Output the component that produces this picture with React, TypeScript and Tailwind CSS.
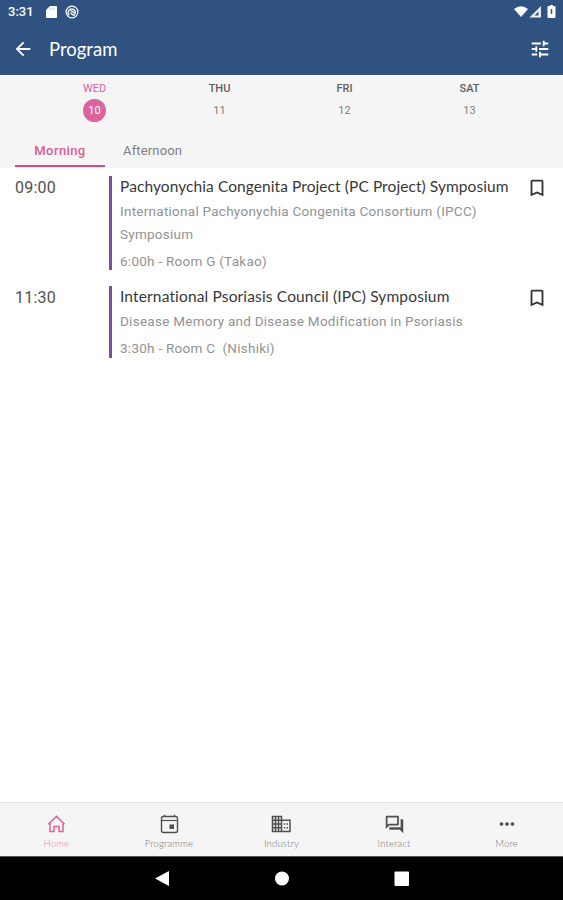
import {
  MdArrowBack,
  MdBookmarkBorder,
  MdMoreHoriz,
  MdOutlineQuestionAnswer,
  MdTune,
} from "react-icons/md";

const days = [
  { name: "WED", date: "10" },
  { name: "THU", date: "11" },
  { name: "FRI", date: "12" },
  { name: "SAT", date: "13" },
];

const sessions = [
  {
    time: "09:00",
    title: "Pachyonychia Congenita Project (PC Project) Symposium",
    titleClass: "tracking-[0.08px]",
    lines: ["International Pachyonychia Congenita Consortium (IPCC)", "Symposium"],
    place: "6:00h - Room G (Takao)",
    heightClass: "h-[94px]",
  },
  {
    time: "11:30",
    title: "International Psoriasis Council (IPC) Symposium",
    titleClass: "tracking-[0.15px]",
    lines: ["Disease Memory and Disease Modification in Psoriasis"],
    place: "3:30h - Room C\u00a0 (Nishiki)",
    heightClass: "h-[72px]",
  },
];

function HomeIcon() {
  return (
    <svg viewBox="0 0 20 20" className="h-5 w-5" fill="none" stroke="currentColor" strokeWidth="1.5">
      <path d="M2.3 10.3 10.500 2.400l8 7.900M4 9.200v8.300h4V12.500h5v5h4V9.200" />
    </svg>
  );
}

function CalendarIcon() {
  return (
    <svg viewBox="0 0 20 20" className="h-5 w-5" fill="none" stroke="currentColor" strokeWidth="1.4">
      <rect x="2.5" y="2.500" width="16" height="16" rx="2" />
      <path d="M2.500 6.500h16" strokeWidth="1.2" />
      <path d="M5.500 .8v2M15.500 .8v2" />
      <rect x="10.500" y="10.500" width="4.500" height="4.500" fill="currentColor" stroke="none" />
    </svg>
  );
}

function BuildingIcon() {
  return (
    <svg viewBox="0 0 20 20" className="h-5 w-5" fill="none" stroke="currentColor" strokeWidth="1.5">
      <path d="M1.500 2.500h9v15h-9zM4.500 2.500v15M7.500 2.500v15M1.500 6.200h9M1.500 10h9M1.500 13.700h9M10.500 6.200h8.500v11.300h-8.500" />
      <path d="M12.700 10H14.200M15.500 10H17M12.700 13.700H14.200M15.500 13.700H17" strokeWidth="1.6" />
    </svg>
  );
}

const navItems = [
  { label: "Home", icon: <HomeIcon />, color: "text-[#df6499]", labelColor: "text-[#e58bb2]" },
  { label: "Programme", icon: <CalendarIcon />, color: "text-[#505050]", labelColor: "text-[#777]" },
  { label: "Industry", icon: <BuildingIcon />, color: "text-[#505050]", labelColor: "text-[#777]" },
  { label: "Interact", icon: <MdOutlineQuestionAnswer size={21} />, color: "text-[#505050]", labelColor: "text-[#777]" },
  { label: "More", icon: <MdMoreHoriz size={22} />, color: "text-[#505050]", labelColor: "text-[#777]" },
];

function StatusBar() {
  return (
    <div className="flex h-6 items-center pr-[7px] pl-2 text-[13px] font-medium text-white">
      <span className="w-[38px]">3:31</span>
      <svg viewBox="0 0 11 12" className="h-[12px] w-[11px]" fill="currentColor">
        <path d="M4 0h6q1 0 1 1v10q0 1-1 1H1q-1 0-1-1V4z" />
        <path d="M4.2 1.5v2M6.3 1.5v2M8.4 1.5v2" stroke="#9db0cb" strokeWidth=".7" />
      </svg>
      <svg viewBox="0 0 14 14" className="ml-[8px] h-[14px] w-[14px]" fill="none" stroke="currentColor">
        <circle cx="7" cy="7" r="5.9" strokeWidth="1.2" />
        <path d="M4.3 10.3A3.6 3.6 0 1 1 10.2 8.5L5.5 5.2M5.2 7.6l3 2.4H10" strokeWidth="1.3" />
      </svg>
      <svg viewBox="0 0 42 14" className="ml-auto h-[14px] w-[42px]" fill="currentColor">
        <path d="M0 4Q7-1.5 14 4L7 12z" />
        <path d="M15.5 12.5 27 1v11.5z" fillOpacity=".9" />
        <path d="m20.5 10.5 4-4v4z" fill="#305280" />
        <path d="M34.5 1H36V0h3v1h1.5q1 0 1 1v10q0 1-1 1h-6q-1 0-1-1V2q0-1 1-1z" />
        <path d="M37.5 4v5" stroke="#305280" strokeWidth="1.5" />
      </svg>
    </div>
  );
}

export default function App() {
  return (
    <div className="flex h-[900px] w-[563px] flex-col bg-white font-[Roboto,sans-serif]">
      <header className="h-[75px] bg-[#305280]">
        <StatusBar />
        <div className="flex h-[50px] items-center pr-[12px] pl-[12px] text-white">
          <MdArrowBack size={22} />
          <h1 className="ml-[15px] font-[Lato,sans-serif] text-[18.5px] leading-[50px]">Program</h1>
          <MdTune size={22} className="ml-auto" />
        </div>
      </header>

      <div className="flex h-[51px] border-t border-b border-t-white border-b-[#f9f9f9] bg-[#f5f5f5] pr-[31px] pl-[32px]">
        {days.map((day, i) => (
          <div key={day.name} className="flex flex-1 flex-col items-center pt-[6px] text-[11px] leading-[14px]">
            <span className={i === 0 ? "text-[#df6499]" : "font-medium text-[#606060]"}>{day.name}</span>
            <span
              className={
                i === 0
                  ? "mt-[3px] flex h-[23px] w-[23px] items-center justify-center rounded-full bg-[#dc649c] text-white"
                  : "mt-[3px] flex h-[23px] items-center text-[#808080]"
              }
            >
              {day.date}
            </span>
          </div>
        ))}
      </div>

      <div className="flex h-[42px] bg-[#f5f5f5] pl-[15px] text-[13px]">
        <div className="flex h-[41px] w-[90px] items-center justify-center border-b-2 border-[#d64d8b] pt-[10px] font-medium tracking-[0.4px] text-[#dc5c95]">
          Morning
        </div>
        <div className="flex h-[41px] items-center pt-[8px] pl-[18px] tracking-[0.15px] text-[#808080]">Afternoon</div>
      </div>

      <main className="flex-1">
        {sessions.map((session) => (
          <div key={session.time} className="flex pt-2 pb-2">
            <div className="w-[109px] pl-[15px] text-[16px] leading-[24px] tracking-[0.2px] text-[#505050]">
              {session.time}
            </div>
            <div className={`flex-1 border-l-[3px] border-[#7b519d] pl-2 ${session.heightClass}`}>
              <h2 className={`font-[Lato,sans-serif] text-[15.5px] leading-[20px] whitespace-nowrap text-[#383838] ${session.titleClass}`}>
                {session.title}
              </h2>
              <div className="pt-[4px] text-[13.5px] leading-[23px] tracking-[0.26px] whitespace-nowrap text-[#929292]">
                {session.lines.map((line) => (
                  <p key={line}>{line}</p>
                ))}
                <p className="pt-[4px]">{session.place}</p>
              </div>
            </div>
            <MdBookmarkBorder size={22} className="mt-[0.5px] mr-[15px] -ml-10 text-[#333]" />
          </div>
        ))}
      </main>

      <nav className="flex h-[54px] border-t border-[#e5e5e5] bg-[#f5f5f5]">
        {navItems.map((item) => (
          <div key={item.label} className={`flex flex-1 flex-col items-center pt-[10px] ${item.color}`}>
            <div className="flex h-[22px] items-center">{item.icon}</div>
            <span className={`mt-[3px] font-[Lato,sans-serif] text-[9.5px] leading-[12px] font-light tracking-[0.2px] ${item.labelColor}`}>
              {item.label}
            </span>
          </div>
        ))}
      </nav>

      <div className="flex h-11 items-center justify-center border-t border-[#555] bg-black text-white">
        <svg viewBox="0 0 254 16" className="h-[16px] w-[254px]" fill="currentColor">
          <path d="M0 7.5 14 0v15z" />
          <circle cx="127" cy="7.5" r="7" />
          <rect x="239.5" y=".5" width="14.5" height="14.5" rx="1" />
        </svg>
      </div>
    </div>
  );
}
